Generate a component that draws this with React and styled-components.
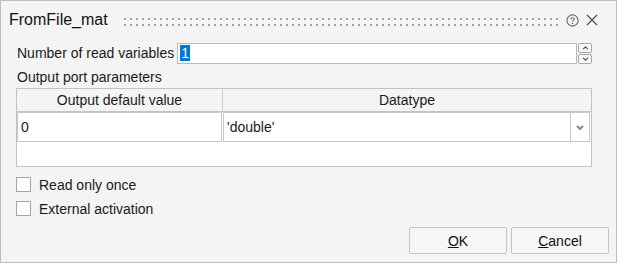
import React, { useState } from 'react'
import styled, { createGlobalStyle } from 'styled-components'

const GlobalStyle = createGlobalStyle`
  body {
    margin: 0;
    background: #ffffff;
    font-family: "Liberation Sans", Arial, sans-serif;
  }
`

const Window = styled.div`
  width: 617px;
  height: 263px;
  box-sizing: border-box;
  border: 1px solid #bcbcbc;
  background: #f4f4f4;
  display: flex;
  flex-direction: column;
  color: #1a1a1a;
  font-size: 14px;
`

const TitleBar = styled.div`
  height: 38px;
  display: flex;
  align-items: center;
  padding: 0 14px 0 8px;
`

const Title = styled.div`
  font-size: 16px;
  color: #111;
  margin-right: 14px;
  white-space: nowrap;
`

const Grip = styled.div`
  flex: 1;
  height: 12px;
  margin: 4px 4px 0 0;
  background-image: radial-gradient(circle, #a0a0a0 0.9px, transparent 1.2px);
  background-size: 6px 6px;
`

const IconButton = styled.span`
  width: 20px;
  height: 20px;
  display: flex;
  align-items: center;
  justify-content: center;
`

const Body = styled.div`
  flex: 1;
  display: flex;
  flex-direction: column;
  padding: 3px 7px 8px 15px;
`

const FieldRow = styled.div`
  display: flex;
  align-items: center;
  height: 22px;
  margin-right: 17px;
`

const Label = styled.label`
  padding-left: 1px;
  white-space: nowrap;
  margin-right: 3px;
`

const InputBox = styled.div`
  flex: 1;
  height: 21px;
  box-sizing: border-box;
  border: 1px solid #b9b9b9;
  background: #fff;
  display: flex;
  align-items: center;
  padding-left: 2px;
  margin-right: 1px;
`

const Selected = styled.span`
  background: #0078d7;
  color: #fff;
  padding: 0 1px;
  line-height: 16px;
`

const Spin = styled.div`
  width: 14px;
  height: 21px;
  display: flex;
  flex-direction: column;
  gap: 1px;
`

const SpinButton = styled.div`
  flex: 1;
  border: 1px solid #a8a8a8;
  border-radius: 2px;
  background: #f7f7f7;
  display: flex;
  align-items: center;
  justify-content: center;
`

const SectionLabel = styled.div`
  margin-top: 5px;
  padding-left: 1px;
  height: 17px;
  line-height: 17px;
`

const Table = styled.div`
  margin-top: 2px;
  margin-right: 17px;
  border: 1px solid #c3c3c3;
  background: #fff;
  height: 79px;
  box-sizing: border-box;
  display: flex;
  flex-direction: column;
`

const HeaderRow = styled.div`
  display: grid;
  grid-template-columns: 205px 1fr;
  height: 22px;
  background: #f4f4f4;
  border-bottom: 1px solid #c3c3c3;
`

const HeaderCell = styled.div`
  display: flex;
  align-items: center;
  justify-content: center;
  border-left: ${p => (p.first ? 'none' : '1px solid #cfcfcf')};
`

const DataRow = styled.div`
  display: grid;
  grid-template-columns: 205px 1fr;
  height: 30px;
`

const DataCell = styled.div`
  border: 1px solid #c8c8c8;
  margin-left: ${p => (p.first ? '0' : '1px')};
  margin-right: ${p => (p.first ? '0' : '1px')};
  display: flex;
  align-items: center;
  padding-left: 3px;
  box-sizing: border-box;
`

const CellText = styled.span`
  flex: 1;
`

const DropArrow = styled.div`
  width: 18px;
  align-self: stretch;
  border-left: 1px solid #c8c8c8;
  display: flex;
  align-items: center;
  justify-content: center;
`

const Checks = styled.div`
  margin-top: 10px;
  display: flex;
  flex-direction: column;
  gap: 9px;
`

const CheckRow = styled.label`
  display: flex;
  align-items: center;
  height: 15px;
`

const Box = styled.span`
  width: 15px;
  height: 15px;
  box-sizing: border-box;
  border: 1px solid #a6a6a6;
  background: #fff;
  margin-right: 8px;
`

const Footer = styled.div`
  margin-top: auto;
  display: flex;
  justify-content: flex-end;
  gap: 4px;
`

const Button = styled.button`
  width: 98px;
  height: 27px;
  box-sizing: border-box;
  border: 1px solid #c4c4c4;
  border-radius: 2px;
  background: #f6f6f6;
  font-family: inherit;
  font-size: 14px;
  color: #111;
  padding: 0;
  u { text-decoration: underline; }
`

const Chevron = ({ dir = 'down', color = '#555', w = 7, h = 4, sw = 1.4 }) => (
  <svg width={w} height={h} viewBox="0 0 8 5">
    <path
      d={dir === 'down' ? 'M1 1 L4 4 L7 1' : 'M1 4 L4 1 L7 4'}
      fill="none"
      stroke={color}
      strokeWidth={sw}
    />
  </svg>
)

const App = () => {
  const [checks, setChecks] = useState({ once: false, ext: false })

  return (
    <>
      <GlobalStyle />
      <Window>
        <TitleBar>
          <Title>FromFile_mat</Title>
          <Grip />
          <IconButton>
            <svg width="13" height="13" viewBox="0 0 13 13">
              <circle cx="6.5" cy="6.5" r="5.6" fill="none" stroke="#6a6a6a" strokeWidth="1.1" />
              <path d="M4.7 5.2 C4.7 3.3 8.3 3.3 8.3 5.1 C8.3 6.3 6.5 6.4 6.5 7.8" fill="none" stroke="#6a6a6a" strokeWidth="1.1" />
              <circle cx="6.5" cy="9.6" r="0.75" fill="#6a6a6a" />
            </svg>
          </IconButton>
          <IconButton>
            <svg width="12" height="12" viewBox="0 0 12 12">
              <path d="M1 1 L11 11 M11 1 L1 11" stroke="#505050" strokeWidth="1.3" />
            </svg>
          </IconButton>
        </TitleBar>
        <Body>
          <FieldRow>
            <Label>Number of read variables</Label>
            <InputBox>
              <Selected>1</Selected>
            </InputBox>
            <Spin>
              <SpinButton><Chevron dir="up" /></SpinButton>
              <SpinButton><Chevron dir="down" /></SpinButton>
            </Spin>
          </FieldRow>
          <SectionLabel>Output port parameters</SectionLabel>
          <Table>
            <HeaderRow>
              <HeaderCell first>Output default value</HeaderCell>
              <HeaderCell>Datatype</HeaderCell>
            </HeaderRow>
            <DataRow>
              <DataCell first><CellText>0</CellText></DataCell>
              <DataCell>
                <CellText>'double'</CellText>
                <DropArrow><Chevron color="#8a8a8a" w={8} h={5} sw={2} /></DropArrow>
              </DataCell>
            </DataRow>
          </Table>
          <Checks>
            <CheckRow onClick={() => setChecks({ ...checks, once: !checks.once })}>
              <Box />Read only once
            </CheckRow>
            <CheckRow onClick={() => setChecks({ ...checks, ext: !checks.ext })}>
              <Box />External activation
            </CheckRow>
          </Checks>
          <Footer>
            <Button><u>O</u>K</Button>
            <Button><u>C</u>ancel</Button>
          </Footer>
        </Body>
      </Window>
    </>
  )
}

export default App
